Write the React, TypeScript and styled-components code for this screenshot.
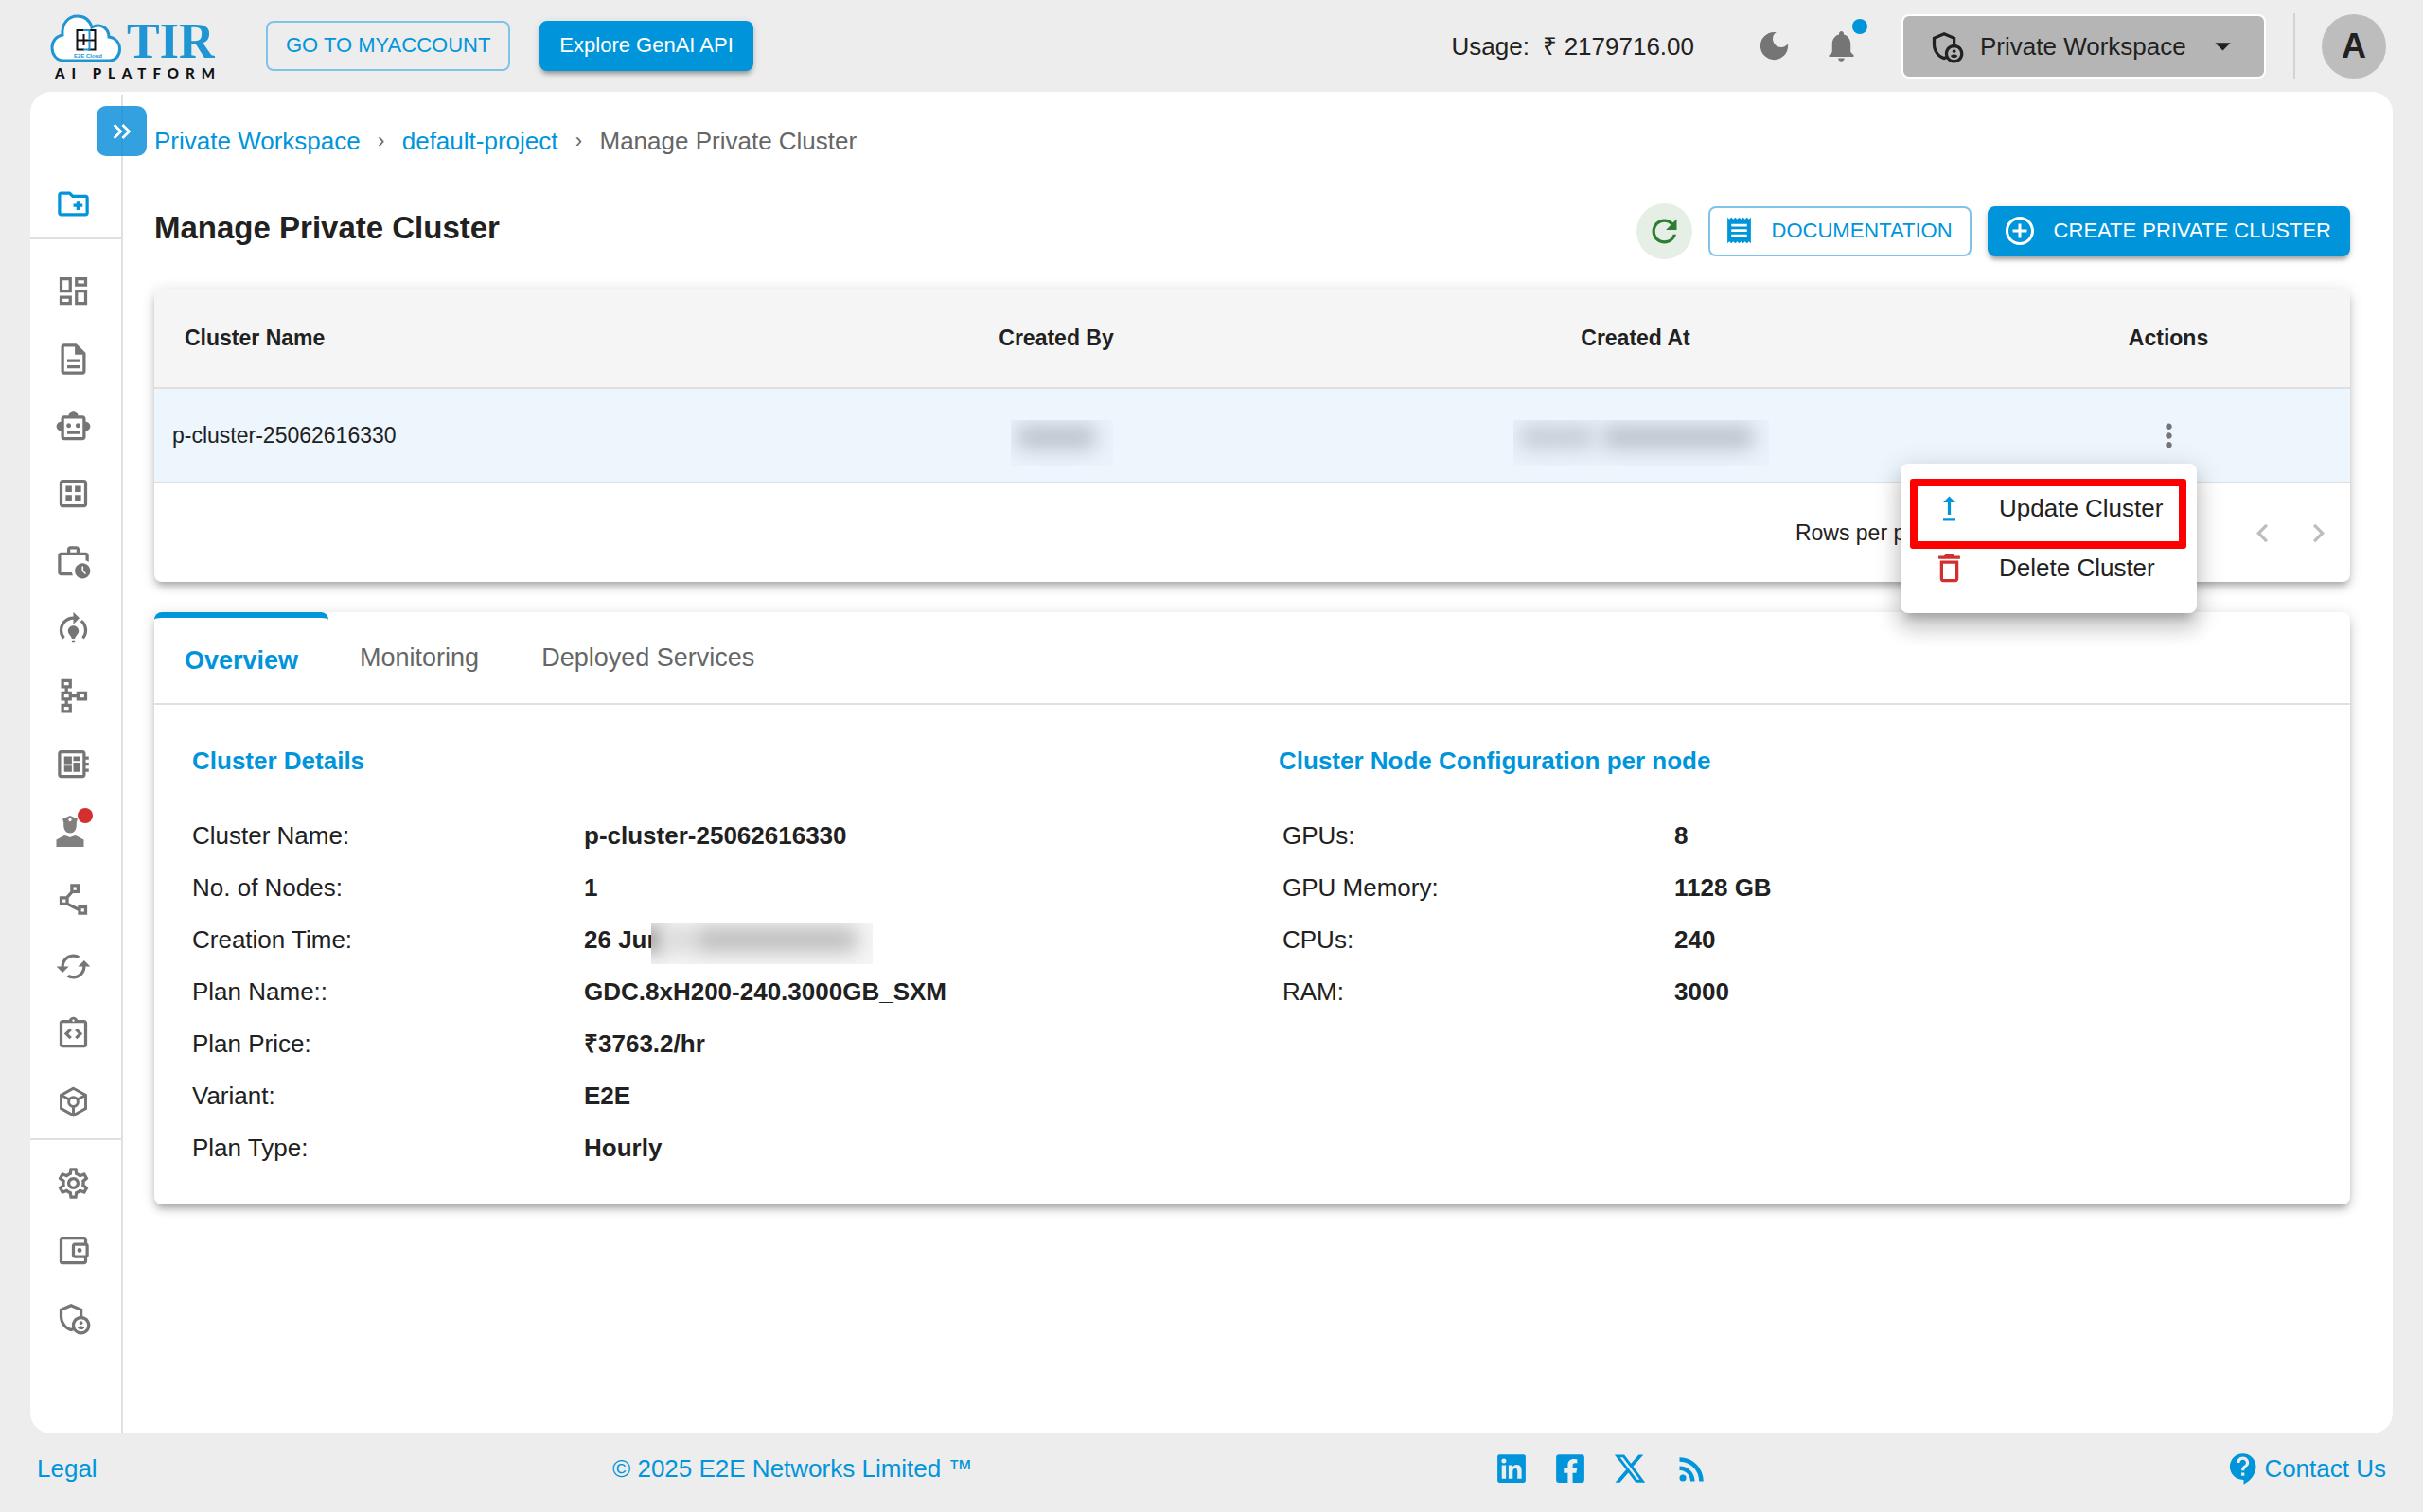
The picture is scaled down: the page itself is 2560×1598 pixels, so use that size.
import React from "react";
import styled, { createGlobalStyle } from "styled-components";
import {
  MdAddCircleOutline,
  MdArrowDropDown,
  MdContactSupport,
  MdDarkMode,
  MdDeleteOutline,
  MdKeyboardArrowLeft,
  MdKeyboardArrowRight,
  MdKeyboardDoubleArrowRight,
  MdModelTraining,
  MdMoreVert,
  MdNotifications,
  MdOutlineAccountBalanceWallet,
  MdOutlineAdminPanelSettings,
  MdOutlineCached,
  MdOutlineCreateNewFolder,
  MdOutlineDashboard,
  MdOutlineDataset,
  MdOutlineDescription,
  MdOutlineDeveloperBoard,
  MdOutlineIntegrationInstructions,
  MdOutlinePolyline,
  MdOutlineSchema,
  MdOutlineSettings,
  MdOutlineSmartToy,
  MdOutlineWorkHistory,
  MdReceipt,
  MdRefresh,
  MdRssFeed,
  MdUpgrade,
} from "react-icons/md";
import { FaFacebookSquare, FaLinkedin } from "react-icons/fa";
import { FaXTwitter } from "react-icons/fa6";

const blue = "#0095db";
const ink = "#212121";
const grey = "#757575";
const line = "#e0e0e0";

const GlobalStyle = createGlobalStyle`
  *, *::before, *::after { box-sizing: border-box; }
  body {
    margin: 0;
    background: #ededed;
    color: ${ink};
    font-family: "Liberation Sans", Arial, Helvetica, sans-serif;
    font-size: 26px;
    line-height: 32px;
  }
  button, select { font: inherit; color: inherit; }
  button { cursor: pointer; }
  a { color: ${blue}; text-decoration: none; }
  svg { display: block; flex: none; }
`;

const Page = styled.div`
  display: flex;
  flex-direction: column;
  min-height: 100vh;
`;

/* ---------- header ---------- */

const Header = styled.header`
  display: flex;
  align-items: center;
  height: 97px;
  padding: 0 39px 0 44px;
`;

const LogoLink = styled.a`
  display: block;
  margin-right: 41px;
`;

const Button = styled.button<{ $solid?: boolean; $icon?: boolean }>`
  display: flex;
  align-items: center;
  gap: 18px;
  height: 53px;
  padding: ${(p) => (p.$icon ? "0 18px 2px 14px" : "0 19px 2px")};
  border: 2px solid ${(p) => (p.$solid ? blue : "#80c3ea")};
  border-radius: 8px;
  background: ${(p) => (p.$solid ? blue : "transparent")};
  color: ${(p) => (p.$solid ? "#fff" : blue)};
  font-size: 22px;
  white-space: nowrap;
  box-shadow: ${(p) =>
    p.$solid ? "0 6px 4px -4px rgba(0,0,0,.2), 0 4px 4px rgba(0,0,0,.14), 0 2px 10px rgba(0,0,0,.12)" : "none"};
`;

const HeaderLeft = styled.div`
  display: flex;
  align-items: center;
  gap: 31px;
`;

const HeaderRight = styled.div`
  display: flex;
  align-items: center;
  margin-left: auto;
`;

const Usage = styled.span`
  margin-right: 65px;
  white-space: pre;
`;

const IconButton = styled.button`
  position: relative;
  display: flex;
  padding: 0;
  border: 0;
  background: none;
  color: ${grey};
`;

const HeaderIcons = styled.div`
  display: flex;
  align-items: center;
  gap: 32px;
  margin-right: 44px;
`;

const Dot = styled.span<{ $color: string; $top: number; $right: number }>`
  position: absolute;
  top: ${(p) => p.$top}px;
  right: ${(p) => p.$right}px;
  width: 16px;
  height: 16px;
  border-radius: 50%;
  background: ${(p) => p.$color};
`;

const WorkspaceButton = styled.button`
  display: flex;
  align-items: center;
  height: 68px;
  width: 385px;
  padding: 0 24px 0 26px;
  border: 2px solid #fff;
  border-radius: 8px;
  background: #b5b5b5;
  white-space: nowrap;

  span {
    flex: 1;
    padding-left: 16px;
    text-align: left;
  }
`;

const HeaderDivider = styled.span`
  width: 2px;
  height: 70px;
  margin: 0 28px 0 29px;
  background: #d3d3d3;
`;

const Avatar = styled.button`
  width: 68px;
  height: 68px;
  padding: 0;
  border: 0;
  border-radius: 50%;
  background: #bdbdbd;
  font-size: 36px;
  font-weight: 700;
`;

/* ---------- shell ---------- */

const Shell = styled.div`
  display: flex;
  flex: 1;
  margin: 0 32px;
  border-radius: 22px;
  background: #fff;
`;

const Sidebar = styled.nav`
  position: relative;
  width: 98px;
  flex: none;
  margin: 3px 0 1px;
  border-right: 2px solid ${line};
`;

const Toggle = styled.button`
  position: absolute;
  top: 12px;
  right: -27px;
  display: flex;
  align-items: center;
  justify-content: center;
  width: 53px;
  height: 53px;
  padding: 0;
  border: 0;
  border-radius: 10px;
  background: rgba(0, 138, 215, 0.8);
  color: #fff;
`;

const NavGroup = styled.div<{ $top: number; $bottom: number; $row: number }>`
  display: grid;
  grid-auto-rows: ${(p) => p.$row}px;
  padding: ${(p) => p.$top}px 6px ${(p) => p.$bottom}px 0;
  & + & {
    border-top: 2px solid ${line};
  }
`;

const MainNav = styled(NavGroup)`
  grid-auto-rows: 1fr;
  height: 952px;
`;

const NavLink = styled.a<{ $active?: boolean }>`
  display: flex;
  align-items: center;
  justify-content: center;
  color: ${(p) => (p.$active ? blue : grey)};
`;

const NavIcon = styled.span`
  position: relative;
`;

const Main = styled.main`
  flex: 1;
  min-width: 0;
  padding: 36px 45px 40px 33px;
`;

const Breadcrumb = styled.nav`
  display: flex;
  align-items: center;
  gap: 17px;
  color: #666;

  small {
    width: 10px;
    font-size: 22px;
    text-align: center;
  }
`;

const TitleRow = styled.div`
  display: flex;
  align-items: center;
  gap: 17px;
  margin: 50px 0 31px;
`;

const Title = styled.h1`
  flex: 1;
  margin: 0;
  padding-bottom: 8px;
  font-size: 33px;
  line-height: 40px;
`;

const RefreshButton = styled(IconButton)`
  align-items: center;
  justify-content: center;
  width: 59px;
  height: 59px;
  border-radius: 50%;
  background: #e5efe5;
  color: #2e7d32;
`;

/* ---------- cards ---------- */

const Card = styled.section`
  border-radius: 8px;
  background: #fff;
  box-shadow: 0 6px 6px -4px rgba(0, 0, 0, 0.2), 0 6px 8px rgba(0, 0, 0, 0.14),
    0 2px 16px rgba(0, 0, 0, 0.12);
  & + & {
    margin-top: 32px;
  }
`;

const Table = styled.table`
  width: 100%;
  table-layout: fixed;
  border-collapse: separate;
  border-spacing: 0;
  font-size: 23px;

  th,
  td {
    padding: 0;
    border-bottom: 2px solid ${line};
    text-align: center;
  }
  th {
    height: 106px;
    background: #f5f5f5;
  }
  th:first-child {
    padding-left: 32px;
    border-top-left-radius: 8px;
    text-align: left;
  }
  th:last-child {
    border-top-right-radius: 8px;
  }
  td {
    height: 100px;
    background: #edf5fd;
  }
  td:first-child {
    padding-left: 19px;
    text-align: left;
  }
`;

const Patch = styled.span<{ $w: number; $h: number; $bg: string }>`
  display: block;
  overflow: hidden;
  width: ${(p) => p.$w}px;
  height: ${(p) => p.$h}px;
  background: ${(p) => p.$bg};
`;

const PatchWrap = styled.div`
  display: flex;
  justify-content: center;
  padding: 16px 0 0 12px;
`;

const ValuePatch = styled(Patch)`
  position: relative;
  margin: 8px 0 0 -11px;
`;

const Smudge = styled.span<{ $color: string; $left: number; $right: number; $width?: number }>`
  display: block;
  flex: ${(p) => (p.$width ? "none" : "1")};
  width: ${(p) => (p.$width ? `${p.$width}px` : "auto")};
  height: 26px;
  margin: 5px ${(p) => p.$right}px 0 ${(p) => p.$left}px;
  border-radius: 8px;
  background: ${(p) => p.$color};
  filter: blur(10px);
`;

const SmudgeRow = styled.span`
  display: flex;
`;

const ActionAnchor = styled.div`
  position: relative;
  display: flex;
  justify-content: center;
  width: 60px;
  margin: 0 auto;
`;

const Menu = styled.div`
  position: absolute;
  z-index: 2;
  top: 49px;
  right: 0;
  width: 313px;
  padding: 16px 0;
  border-radius: 8px;
  background: #fff;
  box-shadow: 0 10px 10px -6px rgba(0, 0, 0, 0.2), 0 16px 20px 2px rgba(0, 0, 0, 0.14),
    0 6px 28px 4px rgba(0, 0, 0, 0.12);
`;

const MenuItem = styled.button`
  display: flex;
  align-items: center;
  gap: 33px;
  width: 100%;
  height: 63px;
  padding: 0 0 0 32px;
  border: 0;
  background: none;
  font-size: 26px;
  white-space: nowrap;
`;

const Highlight = styled.span`
  position: absolute;
  inset: 16px 11px 68px 10px;
  border: 8px solid #fe0000;
  border-radius: 3px;
  pointer-events: none;
`;

const Pagination = styled.div`
  display: flex;
  align-items: center;
  justify-content: flex-end;
  height: 104px;
  padding-right: 4px;
  font-size: 23px;

  label {
    margin-right: 16px;
  }
`;

const PageSize = styled.select`
  width: 70px;
  border: 0;
  background: none;
`;

const Range = styled.span`
  width: 120px;
  margin-right: 97px;
  text-align: center;
`;

const PageButton = styled(IconButton)`
  justify-content: center;
  width: 59px;
  color: #bdbdbd;
`;

const Tabs = styled.div`
  display: flex;
  height: 98px;
  border-bottom: 2px solid ${line};
`;

const Tab = styled.button<{ $active?: boolean }>`
  padding: 0 ${(p) => (p.$active ? 32 : 33)}px;
  border: 0;
  border-top: ${(p) => (p.$active ? `6px solid ${blue}` : "0")};
  border-radius: 8px 8px 0 0;
  background: none;
  color: ${(p) => (p.$active ? blue : "#666")};
  font-size: 27px;
  font-weight: ${(p) => (p.$active ? 700 : 400)};
`;

const Details = styled.div`
  display: grid;
  grid-template-columns: 1fr 1fr;
  gap: 56px;
  padding: 43px 40px 33px;
`;

const DetailTitle = styled.h2`
  margin: 0 0 35px;
  color: ${blue};
  font-size: 26px;
  line-height: 32px;
`;

const DetailList = styled.dl<{ $indent?: boolean }>`
  display: grid;
  grid-template-columns: 414px 1fr;
  grid-auto-rows: 55px;
  align-items: center;
  margin: 0;
  padding-left: ${(p) => (p.$indent ? 4 : 0)}px;

  dd {
    display: flex;
    align-items: center;
    margin: 0;
    font-weight: 700;
  }
`;

/* ---------- footer ---------- */

const Footer = styled.footer`
  display: flex;
  align-items: center;
  justify-content: space-between;
  height: 83px;
  padding: 0 39px 9px;
  color: ${blue};
`;

const Social = styled.div`
  display: flex;
  align-items: center;
  gap: 28px;
  padding-left: 8px;
`;

const Contact = styled.a`
  display: flex;
  align-items: center;
  gap: 2px;
`;

/* ---------- drawings ---------- */

const Logo = () => (
  <svg width="196" height="84" viewBox="0 0 196 84" role="img" aria-label="TIR AI Platform">
    <path
      d="M23 57C15 57 11 50 11 43.500C11 36 16 31 22 30C21 17 29 10 37.500 10C46 10 51 15 53 22C61 17 71 22 71 32C78 33 82.500 38 82.500 45C82.500 52 78 57 71 57Z"
      fill="#fff"
      stroke="#1f96d3"
      strokeWidth="3"
    />
    <path
      d="M45 25H37.500V45.500H45M37.500 35.500H56.500M49 25H56.500V45.500H49M44.500 29V41"
      fill="none"
      stroke="#111"
      strokeWidth="2"
    />
    <path d="M44 25H50.500V34.500M50.500 36.500V45.500H44" fill="none" stroke="#1f96d3" strokeWidth="2" />
    <text x="34" y="53.500" fontFamily="Liberation Sans, sans-serif" fontWeight="700" fontSize="6" fill="#1f96d3">
      E2E Cloud
    </text>
    <text x="90" y="53.500" fontFamily="Liberation Serif, serif" fontWeight="700" fontSize="52" fill="#1f96d3">
      TIR
    </text>
    <text x="14" y="76" fontFamily="Lato, sans-serif" fontWeight="900" fontSize="15" letterSpacing="7" fill="#111">
      AI PLATFORM
    </text>
  </svg>
);

const GuardIcon = () => (
  <svg width="39" height="39" viewBox="0 0 39 39" fill="#808080">
    <path
      fillRule="evenodd"
      d="M8 6.500L16 3L24 6.500L22.800 10V13C22.800 18 20 21.500 16 21.500S9.200 18 9.200 13V10ZM16 5.800a1.700 1.700 0 1 0 .01 0Z"
    />
    <path d="M1.500 36V28.500L10 24Q13 24.500 16 26Q19 24.500 22 24L30.500 28.500V36Z" />
  </svg>
);

const CubeIcon = () => (
  <svg width="39" height="39" viewBox="0 0 24 24" fill="none" stroke="currentColor" strokeWidth="1.800">
    <path d="M12 3.200L20 7.600V16.400L12 20.800L4 16.400V7.600Z" />
    <circle cx="12" cy="12" r="3" />
    <path d="M12 15V20.500M9.400 10.500L4.400 7.800M14.600 10.500L19.600 7.800" />
  </svg>
);

/* ---------- data ---------- */

type NavEntry = { label: string; icon: React.ReactNode; alert?: boolean };

const mainNav: NavEntry[] = [
  { label: "Dashboard", icon: <MdOutlineDashboard size={39} /> },
  { label: "Notebooks", icon: <MdOutlineDescription size={39} /> },
  { label: "GenAI", icon: <MdOutlineSmartToy size={39} /> },
  { label: "Datasets", icon: <MdOutlineDataset size={39} /> },
  { label: "Jobs", icon: <MdOutlineWorkHistory size={39} /> },
  { label: "Model training", icon: <MdModelTraining size={39} /> },
  { label: "Pipelines", icon: <MdOutlineSchema size={39} /> },
  { label: "Compute", icon: <MdOutlineDeveloperBoard size={39} /> },
  { label: "Guardrails", icon: <GuardIcon />, alert: true },
  { label: "Vector database", icon: <MdOutlinePolyline size={39} /> },
  { label: "Sync", icon: <MdOutlineCached size={39} /> },
  { label: "Integrations", icon: <MdOutlineIntegrationInstructions size={39} /> },
  { label: "Containers", icon: <CubeIcon /> },
];

const bottomNav: NavEntry[] = [
  { label: "Settings", icon: <MdOutlineSettings size={39} /> },
  { label: "Billing", icon: <MdOutlineAccountBalanceWallet size={39} /> },
  { label: "Access", icon: <MdOutlineAdminPanelSettings size={39} /> },
];

const clusterDetails: [string, React.ReactNode][] = [
  ["Cluster Name:", "p-cluster-25062616330"],
  ["No. of Nodes:", "1"],
  [
    "Creation Time:",
    <>
      26 Jun
      <ValuePatch $w={234} $h={44} $bg="#f5f5f5">
        <SmudgeRow>
          <Smudge $color="#8c8c8c" $left={-14} $right={0} $width={26} />
          <Smudge $color="#dadada" $left={0} $right={0} $width={34} />
          <Smudge $color="#bdbdbd" $left={0} $right={16} />
        </SmudgeRow>
      </ValuePatch>
    </>,
  ],
  ["Plan Name::", "GDC.8xH200-240.3000GB_SXM"],
  ["Plan Price:", "₹3763.2/hr"],
  ["Variant:", "E2E"],
  ["Plan Type:", "Hourly"],
];

const nodeConfig: [string, React.ReactNode][] = [
  ["GPUs:", "8"],
  ["GPU Memory:", "1128 GB"],
  ["CPUs:", "240"],
  ["RAM:", "3000"],
];

const NavItem = ({ entry, active }: { entry: NavEntry; active?: boolean }) => (
  <NavLink href="#" aria-label={entry.label} $active={active}>
    <NavIcon>
      {entry.icon}
      {entry.alert && <Dot $color="#d32f2f" $top={-5} $right={-1} />}
    </NavIcon>
  </NavLink>
);

const DetailRows = ({ rows, indent }: { rows: [string, React.ReactNode][]; indent?: boolean }) => (
  <DetailList $indent={indent}>
    {rows.map(([label, value]) => (
      <React.Fragment key={label}>
        <dt>{label}</dt>
        <dd>{value}</dd>
      </React.Fragment>
    ))}
  </DetailList>
);

export default function App() {
  return (
    <Page>
      <GlobalStyle />
      <Header>
        <LogoLink href="#">
          <Logo />
        </LogoLink>
        <HeaderLeft>
          <Button>GO TO MYACCOUNT</Button>
          <Button $solid>Explore GenAI API</Button>
        </HeaderLeft>
        <HeaderRight>
          <Usage>{"Usage:  ₹ 2179716.00"}</Usage>
          <HeaderIcons>
            <IconButton aria-label="Dark mode">
              <MdDarkMode size={39} />
            </IconButton>
            <IconButton aria-label="Notifications">
              <MdNotifications size={39} />
              <Dot $color={blue} $top={-9} $right={-8} />
            </IconButton>
          </HeaderIcons>
          <WorkspaceButton>
            <MdOutlineAdminPanelSettings size={39} />
            <span>Private Workspace</span>
            <MdArrowDropDown size={39} />
          </WorkspaceButton>
          <HeaderDivider />
          <Avatar aria-label="Account">A</Avatar>
        </HeaderRight>
      </Header>

      <Shell>
        <Sidebar aria-label="Main">
          <Toggle aria-label="Expand sidebar">
            <MdKeyboardDoubleArrowRight size={32} />
          </Toggle>
          <NavGroup $top={80} $bottom={0} $row={71}>
            <NavItem entry={{ label: "New project", icon: <MdOutlineCreateNewFolder size={39} /> }} active />
          </NavGroup>
          <MainNav $top={19} $bottom={3} $row={72}>
            {mainNav.map((entry) => (
              <NavItem key={entry.label} entry={entry} />
            ))}
          </MainNav>
          <NavGroup $top={10} $bottom={0} $row={71}>
            {bottomNav.map((entry) => (
              <NavItem key={entry.label} entry={entry} />
            ))}
          </NavGroup>
        </Sidebar>

        <Main>
          <Breadcrumb aria-label="Breadcrumb">
            <a href="#">Private Workspace</a>
            <small>›</small>
            <a href="#">default-project</a>
            <small>›</small>
            <span>Manage Private Cluster</span>
          </Breadcrumb>

          <TitleRow>
            <Title>Manage Private Cluster</Title>
            <RefreshButton aria-label="Refresh">
              <MdRefresh size={39} />
            </RefreshButton>
            <Button $icon>
              <MdReceipt size={33} />
              DOCUMENTATION
            </Button>
            <Button $solid $icon>
              <MdAddCircleOutline size={36} />
              CREATE PRIVATE CLUSTER
            </Button>
          </TitleRow>

          <Card>
            <Table>
              <colgroup>
                <col style={{ width: 712 }} />
                <col style={{ width: 482 }} />
                <col style={{ width: 742 }} />
                <col style={{ width: 384 }} />
              </colgroup>
              <thead>
                <tr>
                  <th>Cluster Name</th>
                  <th>Created By</th>
                  <th>Created At</th>
                  <th>Actions</th>
                </tr>
              </thead>
              <tbody>
                <tr>
                  <td>p-cluster-25062616330</td>
                  <td>
                    <PatchWrap>
                      <Patch $w={108} $h={48} $bg="#eaf2fa">
                        <SmudgeRow>
                          <Smudge $color="#bcc4cd" $left={6} $right={18} />
                        </SmudgeRow>
                      </Patch>
                    </PatchWrap>
                  </td>
                  <td>
                    <PatchWrap>
                      <Patch $w={270} $h={48} $bg="#eaf2fa">
                        <SmudgeRow>
                          <Smudge $color="#c6ced6" $left={6} $right={0} $width={80} />
                          <Smudge $color="#bcc4cd" $left={8} $right={16} />
                        </SmudgeRow>
                      </Patch>
                    </PatchWrap>
                  </td>
                  <td>
                    <ActionAnchor>
                      <IconButton aria-label="Cluster actions">
                        <MdMoreVert size={39} />
                      </IconButton>
                      <Menu role="menu">
                        <MenuItem role="menuitem">
                          <MdUpgrade size={39} color={blue} />
                          Update Cluster
                        </MenuItem>
                        <MenuItem role="menuitem">
                          <MdDeleteOutline size={39} color="#d32f2f" />
                          Delete Cluster
                        </MenuItem>
                        <Highlight />
                      </Menu>
                    </ActionAnchor>
                  </td>
                </tr>
              </tbody>
            </Table>
            <Pagination>
              <label htmlFor="page-size">Rows per page:</label>
              <PageSize id="page-size" defaultValue="5">
                <option>5</option>
              </PageSize>
              <Range>1–1 of 1</Range>
              <PageButton aria-label="Previous page">
                <MdKeyboardArrowLeft size={39} />
              </PageButton>
              <PageButton aria-label="Next page">
                <MdKeyboardArrowRight size={39} />
              </PageButton>
            </Pagination>
          </Card>

          <Card>
            <Tabs role="tablist">
              <Tab role="tab" aria-selected $active>
                Overview
              </Tab>
              <Tab role="tab">Monitoring</Tab>
              <Tab role="tab">Deployed Services</Tab>
            </Tabs>
            <Details>
              <div>
                <DetailTitle>Cluster Details</DetailTitle>
                <DetailRows rows={clusterDetails} />
              </div>
              <div>
                <DetailTitle>Cluster Node Configuration per node</DetailTitle>
                <DetailRows rows={nodeConfig} indent />
              </div>
            </Details>
          </Card>
        </Main>
      </Shell>

      <Footer>
        <a href="#">Legal</a>
        <span>© 2025 E2E Networks Limited ™</span>
        <Social>
          <a href="#" aria-label="LinkedIn">
            <FaLinkedin size={34} />
          </a>
          <a href="#" aria-label="Facebook">
            <FaFacebookSquare size={34} />
          </a>
          <a href="#" aria-label="X">
            <FaXTwitter size={36} />
          </a>
          <a href="#" aria-label="RSS">
            <MdRssFeed size={39} />
          </a>
        </Social>
        <Contact href="#">
          <MdContactSupport size={39} />
          Contact Us
        </Contact>
      </Footer>
    </Page>
  );
}
